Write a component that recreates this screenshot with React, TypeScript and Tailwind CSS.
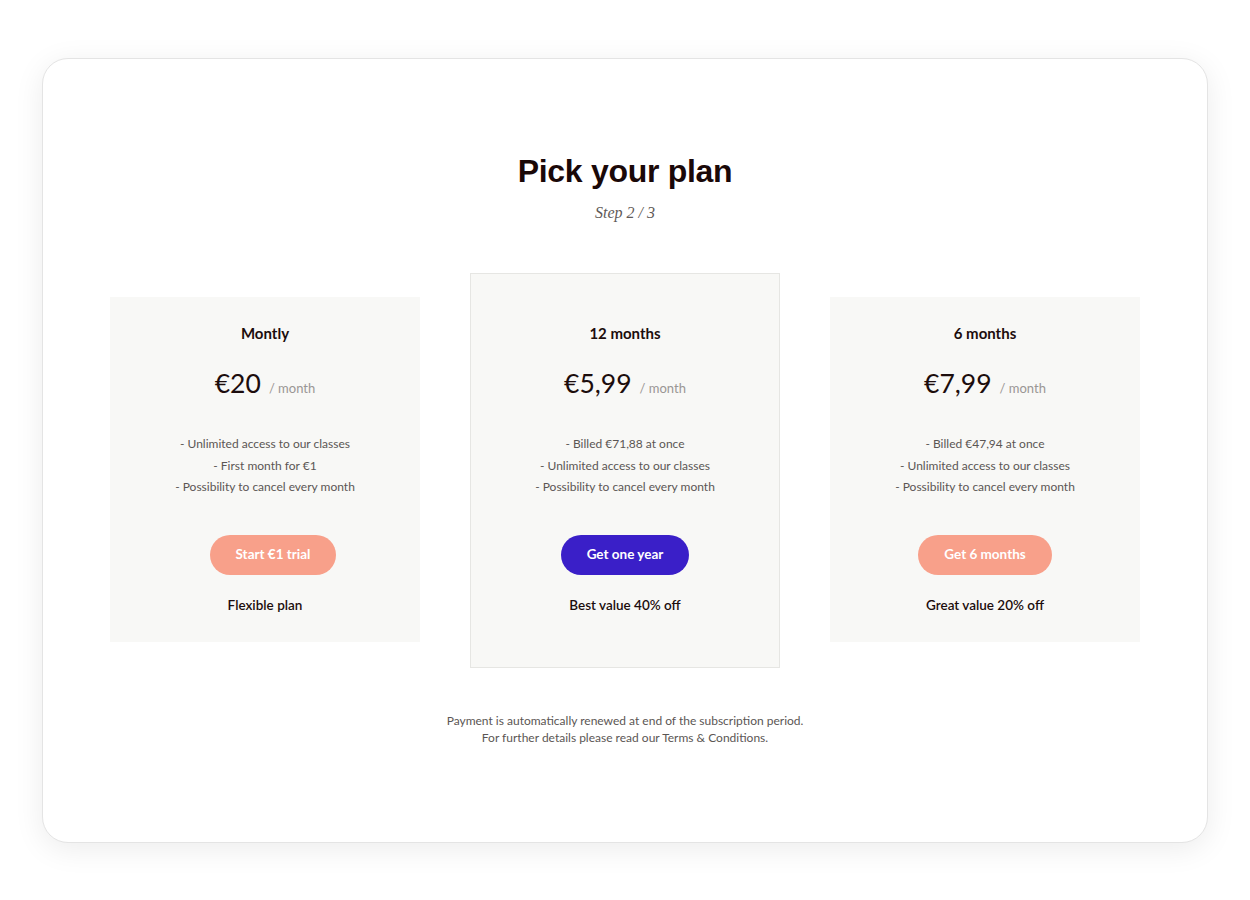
import React from "react";

type Plan = {
  title: string;
  price: string;
  features: string[];
  cta: string;
  note: string;
  featured?: boolean;
  shift?: boolean;
};

const plans: Plan[] = [
  {
    title: "Montly",
    price: "€20",
    features: ["- Unlimited access to our classes", "- First month for €1", "- Possibility to cancel every month"],
    cta: "Start €1 trial",
    note: "Flexible plan",
    shift: true,
  },
  {
    title: "12 months",
    price: "€5,99",
    features: ["- Billed €71,88 at once", "- Unlimited access to our classes", "- Possibility to cancel every month"],
    cta: "Get one year",
    note: "Best value 40% off",
    featured: true,
  },
  {
    title: "6 months",
    price: "€7,99",
    features: ["- Billed €47,94 at once", "- Unlimited access to our classes", "- Possibility to cancel every month"],
    cta: "Get 6 months",
    note: "Great value 20% off",
  },
];

function PlanCard({ plan }: { plan: Plan }) {
  return (
    <div
      className={
        plan.featured
          ? "w-[310px] bg-[#f8f8f6] border border-[#e6e6e3] flex flex-col items-center pt-[49px] pb-[52px]"
          : "w-[310px] bg-[#f8f8f6] flex flex-col items-center pt-[26px] pb-[27px] my-[24px]"
      }
    >
      <div className="text-[15px] leading-[20px] font-bold text-[#1c0d0d]">{plan.title}</div>
      <div className="mt-[24px] h-[32px] flex items-baseline gap-[8px]">
        <span className="text-[26.5px] leading-[32px] text-[#1c0d0d]">{plan.price}</span>
        <span className="text-[13px] text-[#9a9694]">/ month</span>
      </div>
      <div className="mt-[34px] flex flex-col items-center">
        {plan.features.map((f) => (
          <div key={f} className="text-[12px] leading-[21.5px] text-[#5b5654]">
            {f}
          </div>
        ))}
      </div>
      <button
        className={
          plan.featured
            ? "mt-[37px] h-[40px] px-[26px] rounded-full bg-[#3a1fc8] text-white text-[13.5px] font-bold"
            : plan.shift
            ? "mt-[37px] ml-[16px] h-[40px] px-[26px] rounded-full bg-[#f8a08a] text-white text-[13.5px] font-bold"
            : "mt-[37px] h-[40px] px-[26px] rounded-full bg-[#f8a08a] text-white text-[13.5px] font-bold"
        }
      >
        {plan.cta}
      </button>
      <div className="mt-[20px] text-[13.5px] leading-[20px] font-semibold text-[#1c0d0d]">{plan.note}</div>
    </div>
  );
}

export default function App() {
  return (
    <div
      className="w-[1250px] h-[900px] bg-white pt-[58px] px-[42px]"
      style={{ fontFamily: "Lato, 'Noto Sans', sans-serif" }}
    >
      <div className="h-[785px] rounded-[26px] border border-[#e4e4e4] bg-white shadow-[0_6px_30px_rgba(0,0,0,0.08)] flex flex-col items-center pt-[92px]">
        <h1
          className="text-[32px] leading-[40px] font-bold text-[#1a0808] tracking-[-0.3px]"
          style={{ fontFamily: "'Liberation Sans', Arial, sans-serif" }}
        >
          Pick your plan
        </h1>
        <div
          className="mt-[10px] text-[16px] italic text-[#5f5a58]"
          style={{ fontFamily: "'Liberation Serif', 'Times New Roman', serif" }}
        >
          Step 2 / 3
        </div>
        <div className="mt-[48px] flex gap-[50px] items-start">
          {plans.map((p) => (
            <PlanCard key={p.title} plan={p} />
          ))}
        </div>
        <div className="mt-[44px] text-center text-[12px] leading-[17px] text-[#5b5654]">
          <div>Payment is automatically renewed at end of the subscription period.</div>
          <div>For further details please read our Terms &amp; Conditions.</div>
        </div>
      </div>
    </div>
  );
}
